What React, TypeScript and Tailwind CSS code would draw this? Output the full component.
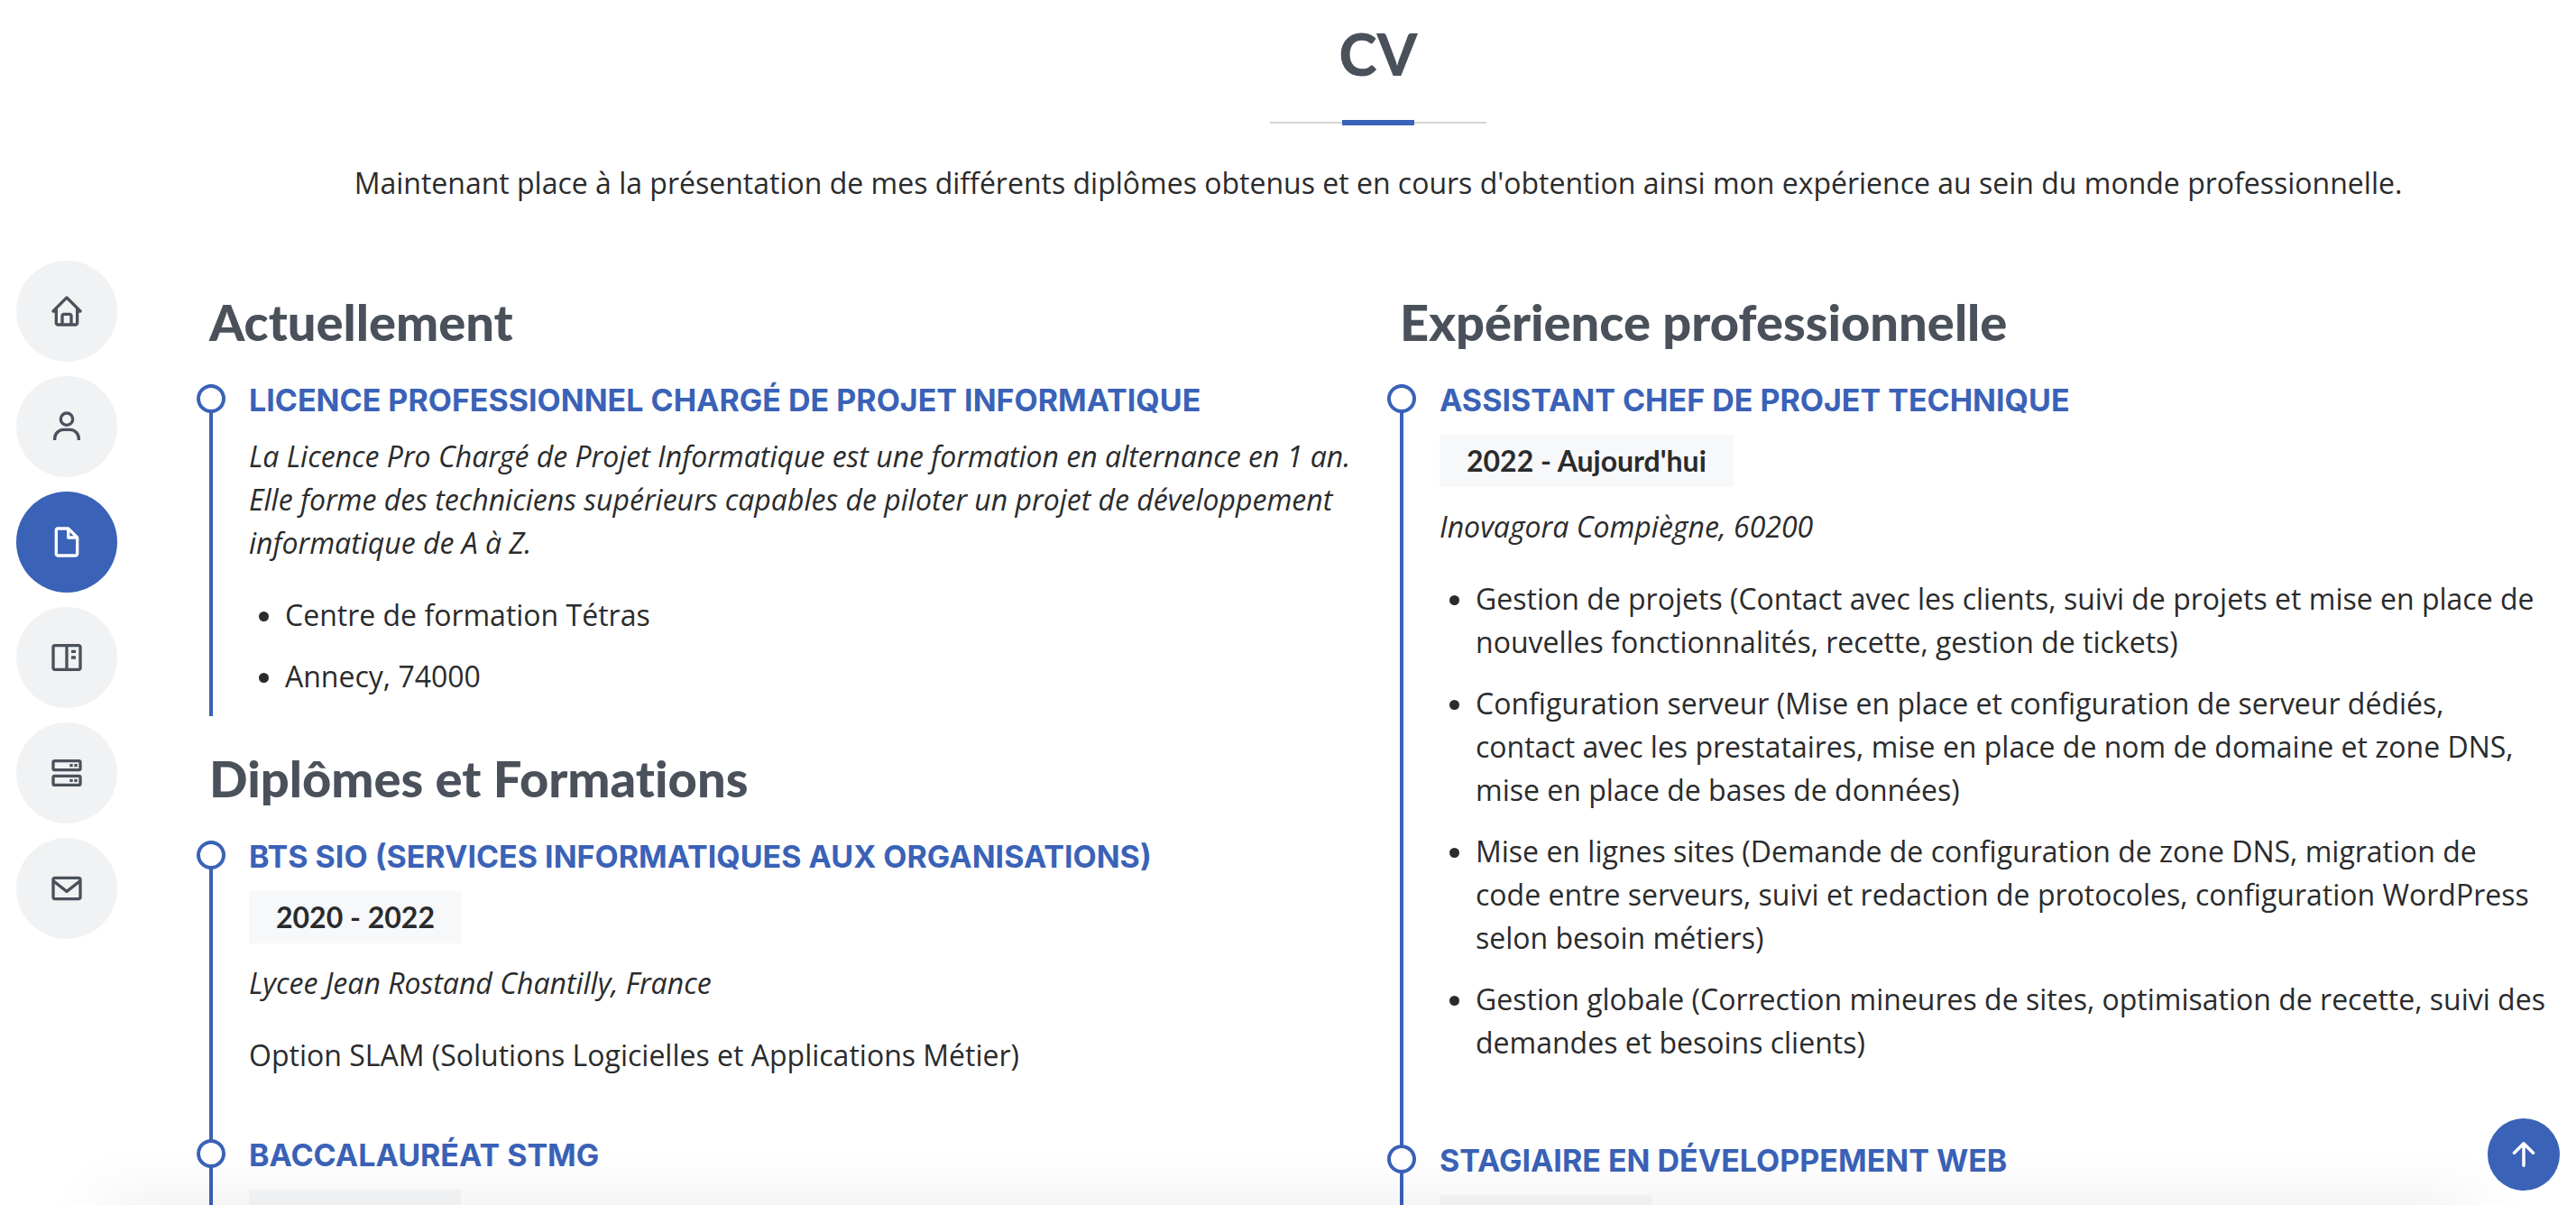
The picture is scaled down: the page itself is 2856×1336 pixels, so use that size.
import React from "react";
import { BiHome, BiUser, BiFileBlank, BiBookContent, BiServer, BiEnvelope } from "react-icons/bi";
import { BsArrowUpShort } from "react-icons/bs";

const links = [
  { label: "Accueil", href: "#hero", Icon: BiHome },
  { label: "À propos", href: "#about", Icon: BiUser },
  { label: "CV", href: "#resume", Icon: BiFileBlank, active: true },
  { label: "Portfolio", href: "#portfolio", Icon: BiBookContent },
  { label: "Services", href: "#services", Icon: BiServer },
  { label: "Contact", href: "#contact", Icon: BiEnvelope },
];

function SideNav() {
  return (
    <nav aria-label="Navigation" className="flex h-screen w-[200px] shrink-0 flex-col justify-center gap-4 pb-1.5 pl-[18px]">
      {links.map(({ label, href, Icon, active }) => (
        <a
          key={href}
          href={href}
          aria-label={label}
          className={
            active
              ? "flex size-28 items-center justify-center rounded-full bg-[#3a62b7] text-white"
              : "flex size-28 items-center justify-center rounded-full bg-[#f1f2f4] text-[#4a515b]"
          }
        >
          <Icon className="size-10" />
        </a>
      ))}
    </nav>
  );
}

function GroupTitle({ children }: { children: React.ReactNode }) {
  return (
    <h3 className="mb-10 font-['Lato',sans-serif] text-[56px] leading-[58px] font-black text-[#4a515b] [font-variant-ligatures:none]">
      {children}
    </h3>
  );
}

function Item({ title, last, children }: { title: string; last?: boolean; children: React.ReactNode }) {
  return (
    <article className={last ? "relative border-l-4 border-[#3a62b7] pl-10" : "relative border-l-4 border-[#3a62b7] pb-[69px] pl-10"}>
      <span className="absolute top-0 -left-[18px] size-8 rounded-full border-4 border-[#3a62b7] bg-white" />
      <h4 className="mb-5 font-['Inter',sans-serif] text-[34px] leading-9 font-bold text-[#3a62b7] uppercase">{title}</h4>
      {children}
    </article>
  );
}

function Dates({ children }: { children: React.ReactNode }) {
  return (
    <h5 className="mb-5 w-fit min-w-[235px] bg-[#f7f8fa] px-[30px] py-2.5 font-['Lato',sans-serif] text-[32px] leading-[38px] font-bold">
      {children}
    </h5>
  );
}

const missions = [
  "Gestion de projets (Contact avec les clients, suivi de projets et mise en place de nouvelles fonctionnalités, recette, gestion de tickets)",
  "Configuration serveur (Mise en place et configuration de serveur dédiés, contact avec les prestataires, mise en place de nom de domaine et zone DNS, mise en place de bases de données)",
  "Mise en lignes sites (Demande de configuration de zone DNS, migration de code entre serveurs, suivi et redaction de protocoles, configuration WordPress selon besoin métiers)",
  "Gestion globale (Correction mineures de sites, optimisation de recette, suivi des demandes et besoins clients)",
];

export default function App() {
  return (
    <div className="relative flex h-screen overflow-hidden bg-white font-['Open_Sans',sans-serif] text-[32px] leading-[48px] text-[#2a2b2c]">
      <SideNav />
      <main id="resume" className="min-w-0 flex-1 px-8 pt-[21px]">
        <header className="flex flex-col items-center text-center">
          <h2 className="font-['Lato',sans-serif] text-[64px] leading-[78px] font-black text-[#4a515b]">CV</h2>
          <div className="mt-[34px] mb-10 flex w-60 items-center">
            <span className="h-0.5 flex-1 bg-[#d4d4d4]" />
            <span className="h-1.5 w-20 bg-[#3a62b7]" />
            <span className="h-0.5 flex-1 bg-[#d4d4d4]" />
          </div>
          <p>
            Maintenant place à la présentation de mes différents diplômes obtenus et en cours d'obtention ainsi mon
            expérience au sein du monde professionnelle.
          </p>
        </header>

        <div className="mt-[101px] grid grid-cols-2 gap-12">
          <section>
            <GroupTitle>Actuellement</GroupTitle>
            <Item title="Licence professionnel chargé de projet informatique" last>
              <p className="mb-8 italic">
                La Licence Pro Chargé de Projet Informatique est une formation en alternance en 1 an. Elle forme des
                techniciens supérieurs capables de piloter un projet de développement informatique de A à Z.
              </p>
              <ul className="list-disc pl-10">
                <li className="pb-5">Centre de formation Tétras</li>
                <li className="pb-5">Annecy, 74000</li>
              </ul>
            </Item>
            <div className="mt-10">
              <GroupTitle>Diplômes et Formations</GroupTitle>
              <Item title="BTS SIO (Services Informatiques aux Organisations)">
                <Dates>2020 - 2022</Dates>
                <p className="mb-8 italic">Lycee Jean Rostand Chantilly, France</p>
                <p>Option SLAM (Solutions Logicielles et Applications Métier)</p>
              </Item>
              <Item title="Baccalauréat STMG">
                <Dates>&nbsp;</Dates>
              </Item>
            </div>
          </section>

          <section>
            <GroupTitle>Expérience professionnelle</GroupTitle>
            <Item title="Assistant chef de projet technique">
              <Dates>2022 - Aujourd'hui</Dates>
              <p className="mb-8 italic">Inovagora Compiègne, 60200</p>
              <ul className="list-disc pl-10">
                {missions.map((mission) => (
                  <li key={mission} className="pb-5">
                    {mission}
                  </li>
                ))}
              </ul>
            </Item>
            <Item title="Stagiaire en développement web">
              <Dates>&nbsp;</Dates>
            </Item>
          </section>
        </div>
      </main>

      <div className="pointer-events-none absolute inset-x-28 -bottom-10 h-10 shadow-[0_0_70px_rgba(0,0,0,0.1)]" />
      <a
        href="#resume"
        aria-label="Haut de page"
        className="absolute right-[18px] bottom-4 flex size-20 items-center justify-center rounded-full bg-[#3a62b7] text-white"
      >
        <BsArrowUpShort className="size-14" />
      </a>
    </div>
  );
}
